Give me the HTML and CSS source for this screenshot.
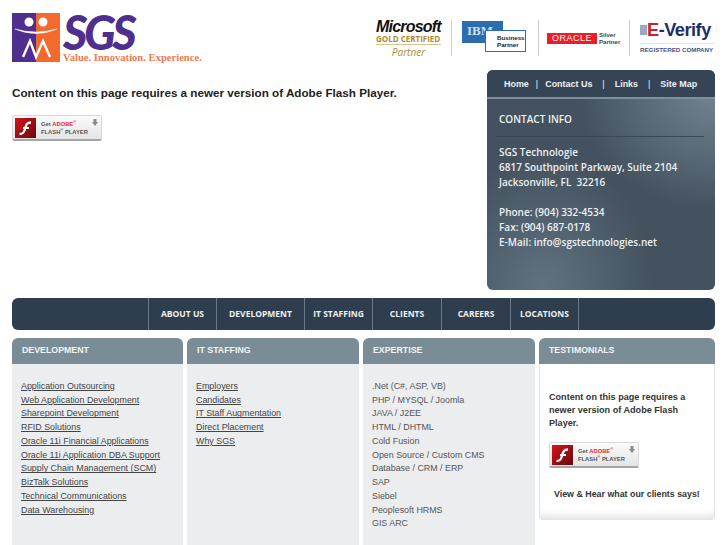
FILE: index.html
```html
<!DOCTYPE html>
<html lang="en">
<head>
    <meta charset="UTF-8">
    <title>SGS Technologies</title>
    <link rel="stylesheet" href="styles.css">
</head>
<body>
    <!-- Header -->
    <header class="top">
        <div class="logo">
            <svg class="logo-mark" width="48" height="49" viewBox="0 0 48 49">
                <rect width="24" height="49" fill="#4f2f8e"/>
                <rect x="24" width="24" height="49" fill="#f4692d"/>
                <circle cx="17" cy="9" r="4.5" fill="#fff"/>
                <circle cx="31" cy="9" r="4.5" fill="#fff"/>
                <path d="M3 16 Q24 22 45 16 Q24 25 3 16Z" fill="#fff" stroke="#fff" stroke-width="0.5"/>
                <path d="M11 44 L18 28 L24 44 L31 28 L38 44" fill="none" stroke="#fff" stroke-width="2.4"/>
            </svg>
            <div class="logo-text">
                <div class="logo-name">SGS</div>
                <div class="logo-tag">Value. Innovation. Experience.</div>
            </div>
        </div>
        <div class="partners">
            <div class="partner ms">
                <div class="ms-name">Microsoft</div>
                <div class="ms-gold">GOLD CERTIFIED</div>
                <div class="ms-partner">Partner</div>
            </div>
            <div class="partner ibm">
                <div class="ibm-blue">IBM</div>
                <div class="ibm-box">Business<br>Partner</div>
            </div>
            <div class="partner oracle">
                <div class="oracle-red">ORACLE</div>
                <div class="oracle-side">Silver<br>Partner</div>
            </div>
            <div class="partner everify">
                <div class="ev-name"><span class="ev-flag"></span><span class="ev-e">E</span>-Verify</div>
                <div class="ev-sub">REGISTERED COMPANY</div>
            </div>
        </div>
    </header>

    <!-- Flash notice + contact -->
    <div class="intro">
        <div class="flash-main">
            <p class="flash-msg">Content on this page requires a newer version of Adobe Flash Player.</p>
            <div class="get-flash">
                <svg class="flash-icon" width="21" height="20" viewBox="0 0 21 20">
                    <defs><linearGradient id="fl" x1="0" y1="0" x2="1" y2="1"><stop offset="0" stop-color="#d8131b"/><stop offset="1" stop-color="#650a0e"/></linearGradient></defs>
                    <rect width="21" height="20" fill="url(#fl)"/>
                    <path d="M16 4.5C11 4.5 11 8 10 11C9 14.5 8 16 4.5 16" fill="none" stroke="#fff" stroke-width="2.3"/>
                    <path d="M8 10H14" stroke="#fff" stroke-width="2"/>
                </svg>
                <span class="flash-label"><span>Get <b>ADOBE<sup>®</sup></b></span><span>FLASH<sup>®</sup> PLAYER</span></span>
                <svg class="flash-down" width="6" height="7" viewBox="0 0 6 7"><path d="M1.5 0h3v3H6L3 7 0 3h1.5z" fill="#8a8a8a"/></svg>
            </div>
        </div>
        <aside class="contact">
            <nav class="contact-nav">
                <a href="#">Home</a><i>|</i><a href="#">Contact Us</a><i class="wide">|</i><a href="#">Links</a><i class="wide">|</i><a href="#">Site Map</a>
            </nav>
            <div class="contact-body">
                <h3>CONTACT INFO</h3>
                <p>SGS Technologie<br>6817 Southpoint Parkway, Suite 2104<br>Jacksonville, FL&nbsp; 32216</p>
                <p>Phone: (904) 332-4534<br>Fax: (904) 687-0178<br>E-Mail: info@sgstechnologies.net</p>
            </div>
        </aside>
    </div>

    <!-- Main menu -->
    <nav class="menu">
        <a href="#" class="m1">ABOUT US</a>
        <a href="#" class="m2">DEVELOPMENT</a>
        <a href="#" class="m3">IT STAFFING</a>
        <a href="#" class="m4">CLIENTS</a>
        <a href="#" class="m5">CAREERS</a>
        <a href="#" class="m6">LOCATIONS</a>
    </nav>

    <!-- Columns -->
    <div class="columns">
        <section class="col col-dev">
            <h4>DEVELOPMENT</h4>
            <ul>
                <li><a href="#">Application Outsourcing</a></li>
                <li><a href="#">Web Application Development</a></li>
                <li><a href="#">Sharepoint Development</a></li>
                <li><a href="#">RFID Solutions</a></li>
                <li><a href="#">Oracle 11i Financial Applications</a></li>
                <li><a href="#">Oracle 11i Application DBA Support</a></li>
                <li><a href="#">Supply Chain Management (SCM)</a></li>
                <li><a href="#">BizTalk Solutions</a></li>
                <li><a href="#">Technical Communications</a></li>
                <li><a href="#">Data Warehousing</a></li>
            </ul>
        </section>
        <section class="col col-it">
            <h4>IT STAFFING</h4>
            <ul>
                <li><a href="#">Employers</a></li>
                <li><a href="#">Candidates</a></li>
                <li><a href="#">IT Staff Augmentation</a></li>
                <li><a href="#">Direct Placement</a></li>
                <li><a href="#">Why SGS</a></li>
            </ul>
        </section>
        <section class="col col-exp">
            <h4>EXPERTISE</h4>
            <ul>
                <li>.Net (C#, ASP, VB)</li>
                <li>PHP / MYSQL / Joomla</li>
                <li>JAVA / J2EE</li>
                <li>HTML / DHTML</li>
                <li>Cold Fusion</li>
                <li>Open Source / Custom CMS</li>
                <li>Database / CRM / ERP</li>
                <li>SAP</li>
                <li>Siebel</li>
                <li>Peoplesoft HRMS</li>
                <li>GIS ARC</li>
            </ul>
        </section>
        <section class="col col-test">
            <h4>TESTIMONIALS</h4>
            <div class="test-body">
                <p class="test-msg">Content on this page requires a newer version of Adobe Flash Player.</p>
                <div class="get-flash">
                    <svg class="flash-icon" width="21" height="20" viewBox="0 0 21 20">
                        <rect width="21" height="20" fill="url(#fl)"/>
                        <path d="M16 4.5C11 4.5 11 8 10 11C9 14.5 8 16 4.5 16" fill="none" stroke="#fff" stroke-width="2.3"/>
                        <path d="M8 10H14" stroke="#fff" stroke-width="2"/>
                    </svg>
                    <span class="flash-label"><span>Get <b>ADOBE<sup>®</sup></b></span><span>FLASH<sup>®</sup> PLAYER</span></span>
                    <svg class="flash-down" width="6" height="7" viewBox="0 0 6 7"><path d="M1.5 0h3v3H6L3 7 0 3h1.5z" fill="#8a8a8a"/></svg>
                </div>
                <p class="test-link">View &amp; Hear what our clients says!</p>
            </div>
        </section>
    </div>
</body>
</html>
```

FILE: styles.css
```css
* {
    box-sizing: border-box;
    margin: 0;
    padding: 0;
}
html, body {
    height: 545px;
    overflow: hidden;
}
body {
    font-family: 'Liberation Sans', Arial, sans-serif;
    background: #fff;
    color: #333;
    padding: 0 12px;
}

/* Header */
.top {
    height: 70px;
    display: flex;
    justify-content: space-between;
    padding-top: 13px;
}
.logo {
    display: flex;
    gap: 3px;
}
.logo-text {
    width: 142px;
}
.logo-name {
    font-family: 'Lato', sans-serif;
    font-size: 47px;
    font-weight: 900;
    font-style: italic;
    line-height: 38px;
    letter-spacing: -3.5px;
    color: #4f2f8e;
}
.logo-tag {
    font-family: 'Liberation Serif', serif;
    font-size: 10.6px;
    font-weight: 700;
    line-height: 12px;
    margin-top: 1px;
    color: #f4794a;
    white-space: nowrap;
}
.partners {
    display: flex;
    height: 36px;
    margin-top: 7px;
}
.partner {
    border-left: 1px solid #ccc;
    height: 36px;
}
.ms {
    border-left: 0;
    width: 75px;
    line-height: 1;
}
.ms-name {
    font-size: 16px;
    font-weight: 700;
    font-style: italic;
    letter-spacing: -0.8px;
    line-height: 14px;
    color: #111;
}
.ms-gold {
    font-family: 'Open Sans', sans-serif;
    font-size: 8px;
    font-weight: 700;
    line-height: 9px;
    color: #a98a35;
    padding-bottom: 1px;
    margin-right: 10px;
    border-bottom: 1px solid #d9c48a;
    white-space: nowrap;
}
.ms-partner {
    font-family: 'Open Sans', sans-serif;
    font-size: 10px;
    font-style: italic;
    line-height: 11px;
    color: #a98a35;
    margin: 2px 10px 0 0;
    text-align: center;
}
.ibm {
    width: 87px;
    position: relative;
}
.ibm-blue {
    position: absolute;
    left: 10px;
    top: 1px;
    width: 41px;
    height: 22px;
    padding: 3px 0 0 5px;
    background: #2c6db0;
    color: #cfe0f0;
    font-family: 'Liberation Serif', serif;
    font-weight: 700;
    font-size: 13px;
    line-height: 14px;
}
.ibm-box {
    position: absolute;
    left: 33px;
    top: 10px;
    width: 41px;
    height: 22px;
    padding: 3px 0 0 11px;
    background: #fff;
    border: 1px solid #2c6db0;
    font-size: 6.2px;
    font-weight: 700;
    line-height: 7px;
    color: #222;
}
.oracle {
    width: 91px;
    display: flex;
    align-items: center;
    gap: 2px;
    padding-left: 8px;
}
.oracle-red {
    width: 50px;
    height: 11px;
    background: #ee1c25;
    color: #fff;
    font-size: 9px;
    line-height: 11px;
    text-align: center;
    letter-spacing: 0.5px;
}
.oracle-side {
    font-size: 6.1px;
    font-weight: 700;
    line-height: 7px;
    color: #444;
}
.everify {
    width: 86px;
    padding-left: 10px;
}
.ev-name {
    display: flex;
    align-items: center;
    font-size: 18.2px;
    font-weight: 700;
    line-height: 20px;
    letter-spacing: -0.5px;
    color: #1d2f6b;
}
.ev-flag {
    width: 7px;
    height: 10px;
    flex: none;
    background: #9aa7c7;
}
.ev-e {
    color: #c8202f;
}
.ev-sub {
    font-size: 6.2px;
    font-weight: 700;
    line-height: 9px;
    margin-top: 3px;
    padding-top: 1px;
    border-top: 1px solid #dfe3ea;
    color: #46557f;
    white-space: nowrap;
}

/* Flash notice + contact */
.intro {
    display: flex;
    justify-content: space-between;
    height: 228px;
}
.flash-msg {
    font-size: 11.68px;
    font-weight: 700;
    line-height: 15px;
    color: #222;
    margin-top: 15px;
    margin-bottom: 15px;
}
.get-flash {
    width: 90px;
    height: 26px;
    display: flex;
    align-items: center;
    gap: 5px;
    padding: 0 2px;
    position: relative;
    background: linear-gradient(#fbfbfb, #e4e4e4);
    border: 1px solid #d8d8d8;
    border-bottom: 2px solid #a5a5a5;
    border-radius: 2px;
}
.flash-icon {
    flex: none;
}
.flash-label {
    display: flex;
    flex-direction: column;
    font-size: 5.8px;
    font-weight: 700;
    line-height: 8px;
    color: #555;
    white-space: nowrap;
}
.flash-label b {
    color: #e8282f;
}
.flash-label sup {
    font-size: 4px;
    line-height: 0;
}
.flash-down {
    position: absolute;
    top: 3px;
    right: 3px;
}
.contact {
    width: 228px;
    height: 220px;
    border-radius: 6px;
    overflow: hidden;
    background:
        radial-gradient(ellipse at 100% 10%, rgba(125, 145, 155, 0.8), rgba(125, 145, 155, 0) 42%),
        radial-gradient(ellipse at 25% 100%, rgba(115, 135, 150, 0.6), rgba(115, 135, 150, 0) 45%),
        #44525f;
}
.contact-nav {
    height: 29px;
    display: flex;
    align-items: center;
    padding-left: 17px;
    background: #364555;
    border-bottom: 2px solid #7d8f99;
    font-size: 8.95px;
    font-weight: 700;
    color: #eef1f3;
}
.contact-nav a {
    color: #eef1f3;
    text-decoration: none;
}
.contact-nav i {
    font-style: normal;
    font-weight: 400;
    margin: 0 7px;
}
.contact-nav i.wide {
    margin: 0 10px;
}
.contact-body {
    padding: 13px 11px 0 9px;
    font-family: 'Open Sans', sans-serif;
    font-size: 10px;
    font-weight: 600;
    line-height: 15px;
    color: #eef0f1;
}
.contact-body h3 {
    font-size: 10px;
    font-weight: 600;
    line-height: 15px;
    padding: 0 0 9px 3px;
    margin-bottom: 8px;
    border-bottom: 1px solid #3a4755;
}
.contact-body p {
    padding-left: 3px;
    margin-bottom: 15px;
    white-space: nowrap;
}

/* Main menu */
.menu {
    height: 32px;
    display: flex;
    padding-left: 136px;
    background: #2f3e4e;
    border-radius: 6px;
}
.menu a {
    height: 32px;
    line-height: 32px;
    text-align: center;
    border-left: 1px solid #6c7a87;
    font-family: 'Open Sans', sans-serif;
    font-size: 8.5px;
    font-weight: 700;
    color: #eef0f2;
    text-decoration: none;
    white-space: nowrap;
}
.m1 { width: 68px; }
.m2 { width: 88px; }
.m3 { width: 68px; }
.m4 { width: 69px; }
.m5 { width: 69px; }
.m6 { width: 69px; border-right: 1px solid #6c7a87; }

/* Columns */
.columns {
    display: flex;
    gap: 4px;
    margin-top: 8px;
}
.col {
    height: 207px;
    background: #ebedef;
    border-radius: 6px 6px 0 0;
}
.col-dev { width: 171px; }
.col-it { width: 172px; }
.col-exp { width: 172px; }
.col-test {
    width: 176px;
    height: 182px;
    background: #fff;
    border: 1px solid #e4e4e4;
    border-top: 0;
    border-radius: 6px 6px 4px 4px;
    box-shadow: inset 0 -8px 6px -4px #e6e6e6;
}
.col h4 {
    height: 26px;
    line-height: 24px;
    padding-left: 10px;
    background: #7a8d96;
    border-radius: 6px 6px 0 0;
    font-size: 8.8px;
    font-weight: 700;
    color: #f2f4f5;
}
.col-test h4 {
    margin: 0 -1px;
}
.col ul {
    list-style: none;
    padding: 15.9px 0 0 9px;
    font-size: 8.9px;
    line-height: 13.75px;
    color: #444;
}
.col-exp ul {
    color: #555;
}
.col a {
    color: #444;
}
.test-body {
    padding: 27px 9px 0;
}
.test-msg {
    font-size: 9.1px;
    font-weight: 700;
    line-height: 13px;
    color: #333;
    margin-bottom: 12px;
}
.test-link {
    font-size: 8.85px;
    font-weight: 700;
    line-height: 13px;
    color: #333;
    margin-top: 20px;
    padding-left: 5px;
    white-space: nowrap;
}
```
